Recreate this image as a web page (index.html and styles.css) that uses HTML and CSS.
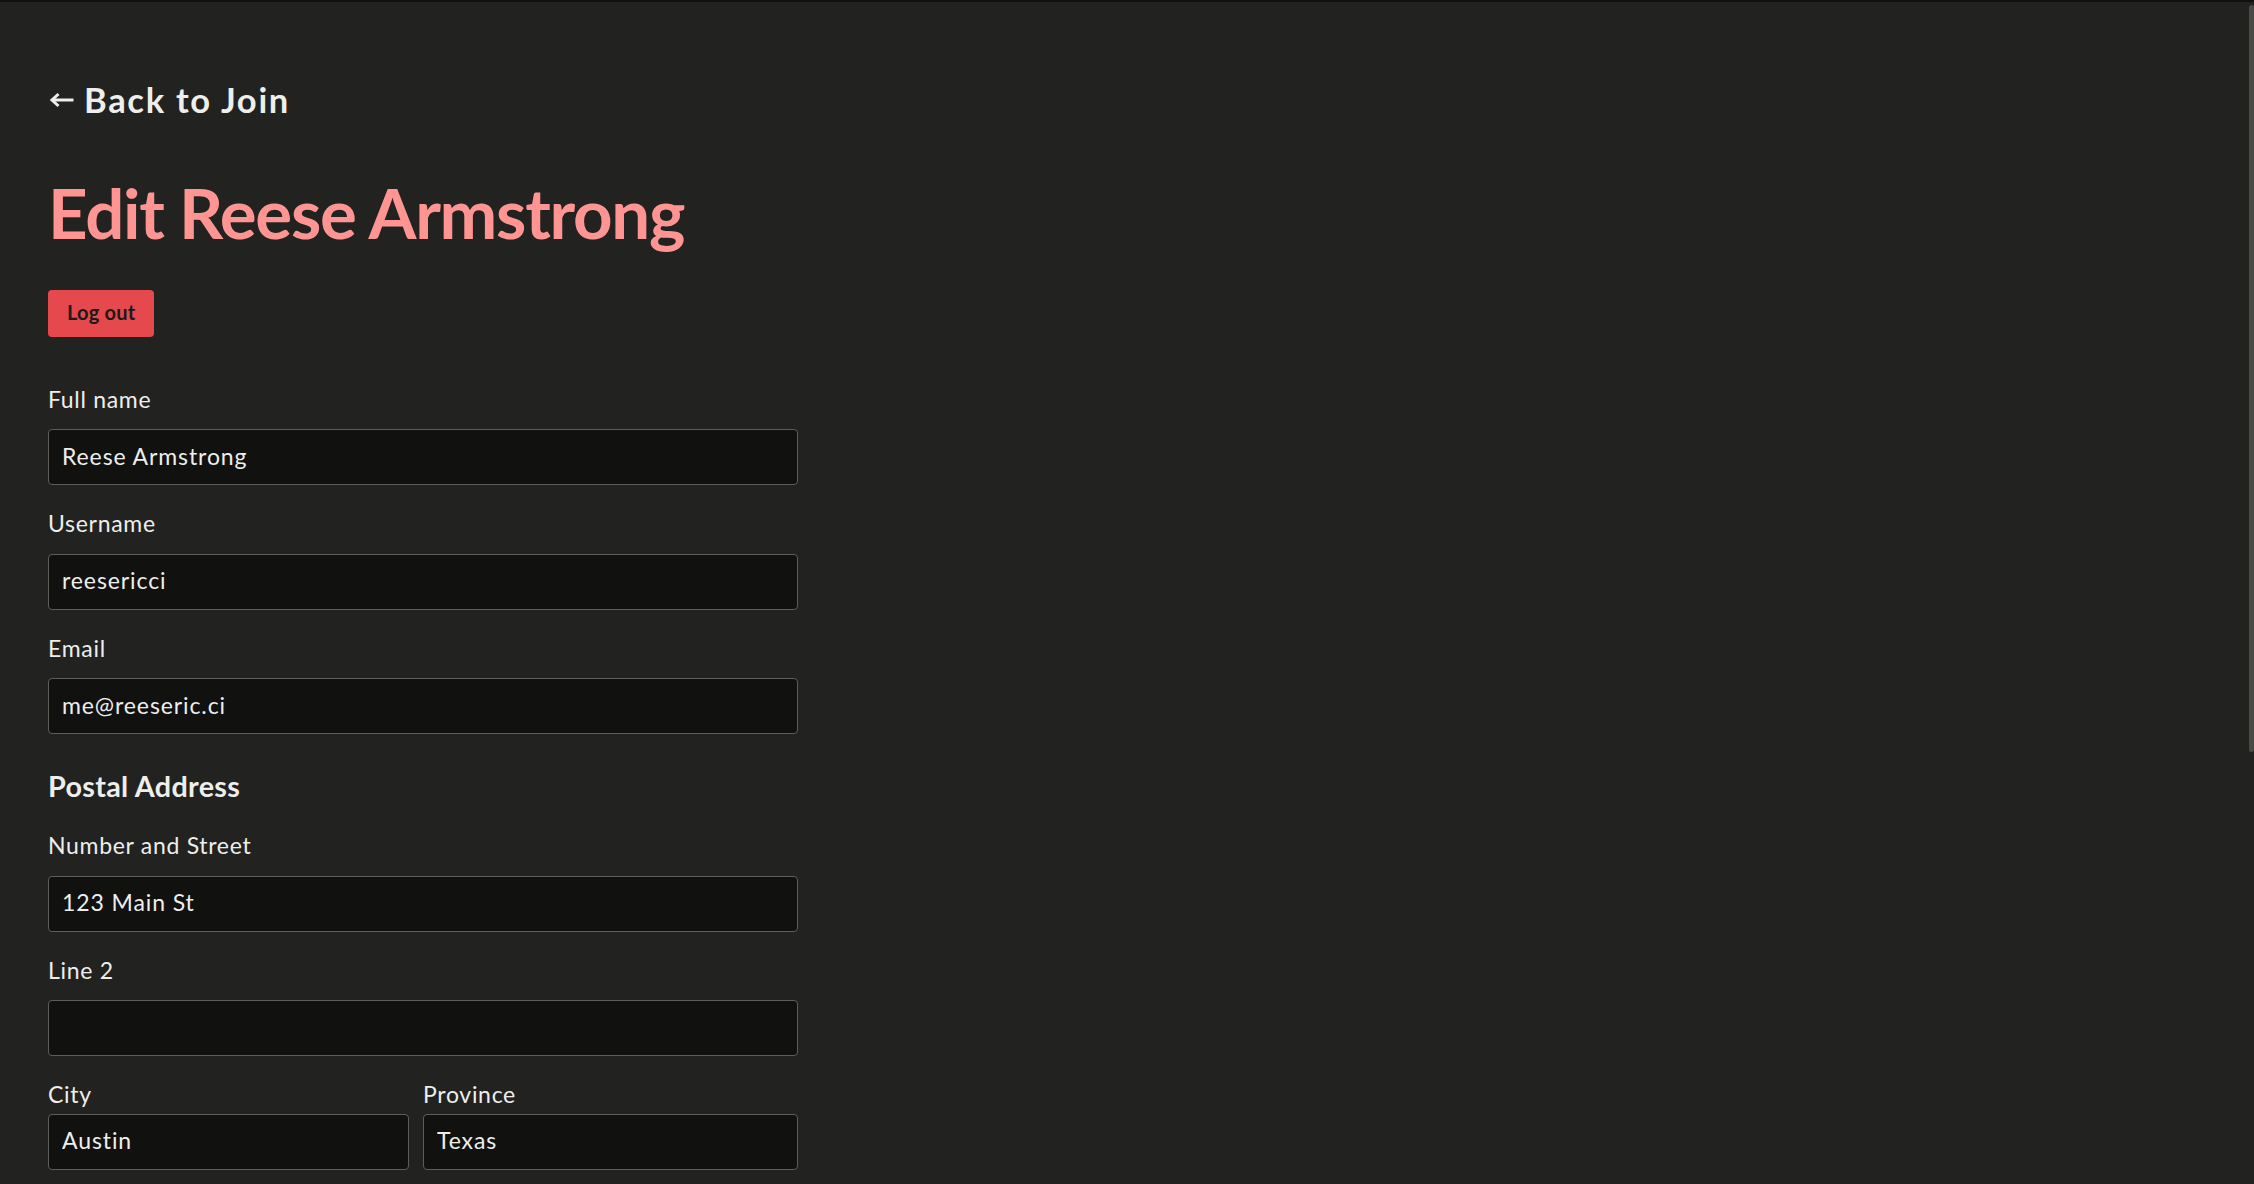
FILE: index.html
```html
<!DOCTYPE html>
<html lang="en">
<head>
<meta charset="utf-8">
<title>Edit Reese Armstrong</title>
<link rel="stylesheet" href="styles.css">
</head>
<body>
<main class="page">
  <a class="back" href="#">
    <svg class="back-arrow" width="25" height="16" viewBox="0 0 25 16" aria-hidden="true">
      <path d="M24.5 8H4" stroke="currentColor" stroke-width="3" fill="none"/>
      <path d="M9.5 2L3 8l6.5 6" stroke="currentColor" stroke-width="3" fill="none" stroke-linejoin="miter"/>
    </svg>
    <span>Back to Join</span>
  </a>
  <h1 class="title">Edit Reese Armstrong</h1>
  <button class="logout" type="button">Log out</button>

  <form class="form">
    <div class="field">
      <label class="label" for="fullname">Full name</label>
      <input class="input" id="fullname" type="text" value="Reese Armstrong">
    </div>
    <div class="field">
      <label class="label" for="username">Username</label>
      <input class="input" id="username" type="text" value="reesericci">
    </div>
    <div class="field">
      <label class="label" for="email">Email</label>
      <input class="input" id="email" type="email" value="me@reeseric.ci">
    </div>

    <h2 class="section">Postal Address</h2>

    <div class="field">
      <label class="label" for="street">Number and Street</label>
      <input class="input" id="street" type="text" value="123 Main St">
    </div>
    <div class="field">
      <label class="label" for="line2">Line 2</label>
      <input class="input" id="line2" type="text" value="">
    </div>
    <div class="row">
      <div class="cell">
        <label class="label tight" for="city">City</label>
        <input class="input" id="city" type="text" value="Austin">
      </div>
      <div class="cell">
        <label class="label tight" for="province">Province</label>
        <input class="input" id="province" type="text" value="Texas">
      </div>
    </div>
  </form>
</main>
<div class="scroll-thumb" aria-hidden="true"></div>
</body>
</html>
```

FILE: styles.css
```css
html {
  background: #222221;
}

body {
  margin: 0;
  border-top: 2px solid #111110;
  background: #222221;
  color: #eeeeec;
  font-family: Lato, "Liberation Sans", sans-serif;
  font-size: 23px;
  letter-spacing: 0.7px;
}

.page {
  padding: 77px 48px 0;
  display: flex;
  flex-direction: column;
  align-items: flex-start;
}

.back {
  display: flex;
  align-items: center;
  gap: 10px;
  height: 41.4px;
  color: #eeeeec;
  text-decoration: none;
  font-weight: 700;
  font-size: 34.5px;
  line-height: 41.4px;
  letter-spacing: 1.7px;
  padding-left: 1px;
}

.back-arrow {
  display: block;
  flex: none;
}

.title {
  margin: 51.5px 0 0;
  color: #ff9592;
  font-weight: 700;
  font-size: 69px;
  line-height: 82.8px;
  letter-spacing: -1.3px;
}

.logout {
  margin-top: 35.3px;
  height: 47px;
  padding: 0 19px 3px;
  border: 0;
  border-radius: 4px;
  background: #e5484d;
  color: #1a1a19;
  font-family: inherit;
  font-weight: 700;
  font-size: 20px;
  line-height: 24px;
  letter-spacing: 0.2px;
}

.form {
  margin-top: 44.85px;
  width: 750px;
}

.field {
  margin-bottom: 21px;
}

.label {
  display: block;
  font-size: 23px;
  line-height: 34.5px;
  margin-bottom: 13px;
}

.label.tight {
  margin-bottom: 2px;
}

.input {
  display: block;
  box-sizing: border-box;
  width: 100%;
  height: 56px;
  margin: 0;
  padding: 0 13px 3px;
  border: 1px solid #5e5d59;
  border-radius: 4px;
  background: #111110;
  color: #eeeeec;
  font-family: inherit;
  font-size: 23px;
  letter-spacing: 0.9px;
  outline: none;
}

.section {
  margin: 35px 0 24.5px;
  font-weight: 700;
  font-size: 28.75px;
  line-height: 34.5px;
  letter-spacing: 0.3px;
}

.row {
  display: grid;
  grid-template-columns: 361fr 375fr;
  gap: 14px;
}

.scroll-thumb {
  position: fixed;
  top: 5px;
  right: 0;
  width: 5px;
  height: 747px;
  border-radius: 3px;
  background: #4a4a47;
}
```
